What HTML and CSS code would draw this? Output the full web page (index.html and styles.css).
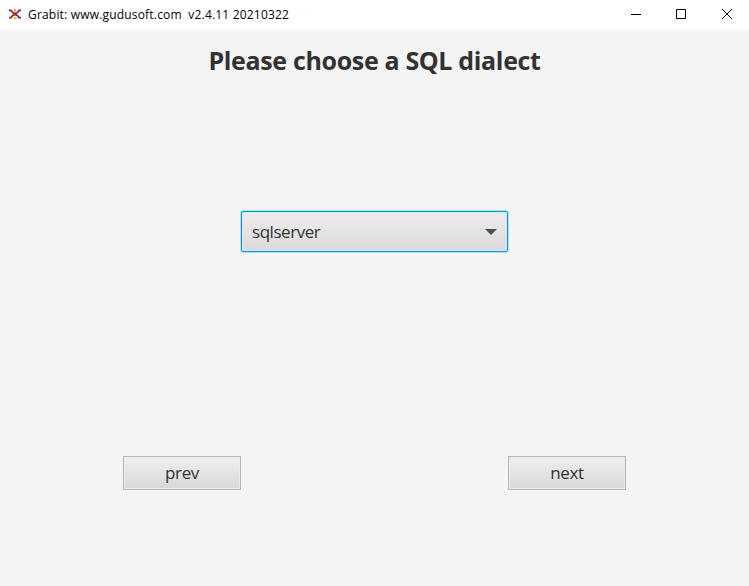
FILE: index.html
```html
<!DOCTYPE html>
<html lang="en">
<head>
<meta charset="utf-8">
<title>Grabit</title>
<link rel="stylesheet" href="styles.css">
</head>
<body>
<header class="titlebar">
  <svg class="logo" viewBox="0 0 14 14" width="14" height="14" fill="none">
    <path d="M1 3.300H3Q4.500 6.300 7 6.300T11 3.300H13" stroke="#a81c36" stroke-width="1.700"/>
    <path d="M1 10.700H3Q4 8 7 7.300Q10 8 11 10.700H13" stroke="#7e2438" stroke-width="1.700"/>
    <path d="M7 2V5.500M5.500 11.300H8.500" stroke="#efb035" stroke-width="2"/>
  </svg>
  <span class="caption">Grabit: www.gudusoft.com&nbsp; v2.4.11 20210322</span>
  <nav class="controls">
    <svg viewBox="0 0 46 29"><path d="M18 14.500H28"/></svg>
    <svg viewBox="0 0 46 29"><path d="M17.500 9.500H26.500V18.500H17.500Z"/></svg>
    <svg viewBox="0 0 46 29"><path d="M18 9 28 19M28 9 18 19"/></svg>
  </nav>
</header>
<main class="panel">
  <h1 class="heading">Please choose a SQL dialect</h1>
  <div class="combo"><span class="value">sqlserver</span><i class="arrow"></i></div>
  <div class="actions">
    <button class="btn">prev</button>
    <button class="btn">next</button>
  </div>
</main>
</body>
</html>
```
FILE: styles.css
```css
* { box-sizing: border-box; }
body { margin: 0; width: 749px; height: 586px; display: flex; flex-direction: column; overflow: hidden; background: #f4f4f4; font-family: "Open Sans", sans-serif; color: #323232; }
.titlebar { height: 30px; background: #fff; display: flex; padding-left: 8px; color: #000; }
.logo { margin-top: 7px; flex: none; }
.caption { margin-left: 6px; font-size: 12px; line-height: 29px; letter-spacing: 0.185px; white-space: nowrap; }
.controls { margin-left: auto; display: flex; margin-right: -1px; }
.controls svg { width: 46px; height: 29px; fill: none; stroke: #000; stroke-width: 1; }
.controls svg:nth-child(-n+2) { position: relative; left: 1px; }
.panel { flex: 1; display: flex; flex-direction: column; align-items: center; }
.heading { margin: 13px 0 0; font-size: 25px; font-weight: 700; line-height: 34px; letter-spacing: -0.34px; white-space: nowrap; }
.combo { width: 267px; height: 41px; margin-top: 134px; border: 1px solid #039ed3; border-radius: 2px; background: linear-gradient(#eee, #d9d9d9); box-shadow: 0 0 0 1px #b0dcec, inset 0 0 0 1px #d5e6ec; display: flex; align-items: center; justify-content: space-between; padding: 0 10px; }
.value { font-size: 17px; line-height: 39px; letter-spacing: -0.45px; }
.arrow { border: 6px solid transparent; border-top: 6px solid #515151; border-bottom: 0; }
.actions { width: 503px; margin-top: 204px; display: flex; justify-content: space-between; }
.btn { width: 118px; height: 34px; padding: 0; border: 1px solid #b5b5b5; background: linear-gradient(#eee, #d9d9d9); box-shadow: inset 0 0 0 1px #ececec, 0 1px #f9f9f9; font: 17px/30px "Open Sans", sans-serif; letter-spacing: -0.35px; color: #323232; }
```
